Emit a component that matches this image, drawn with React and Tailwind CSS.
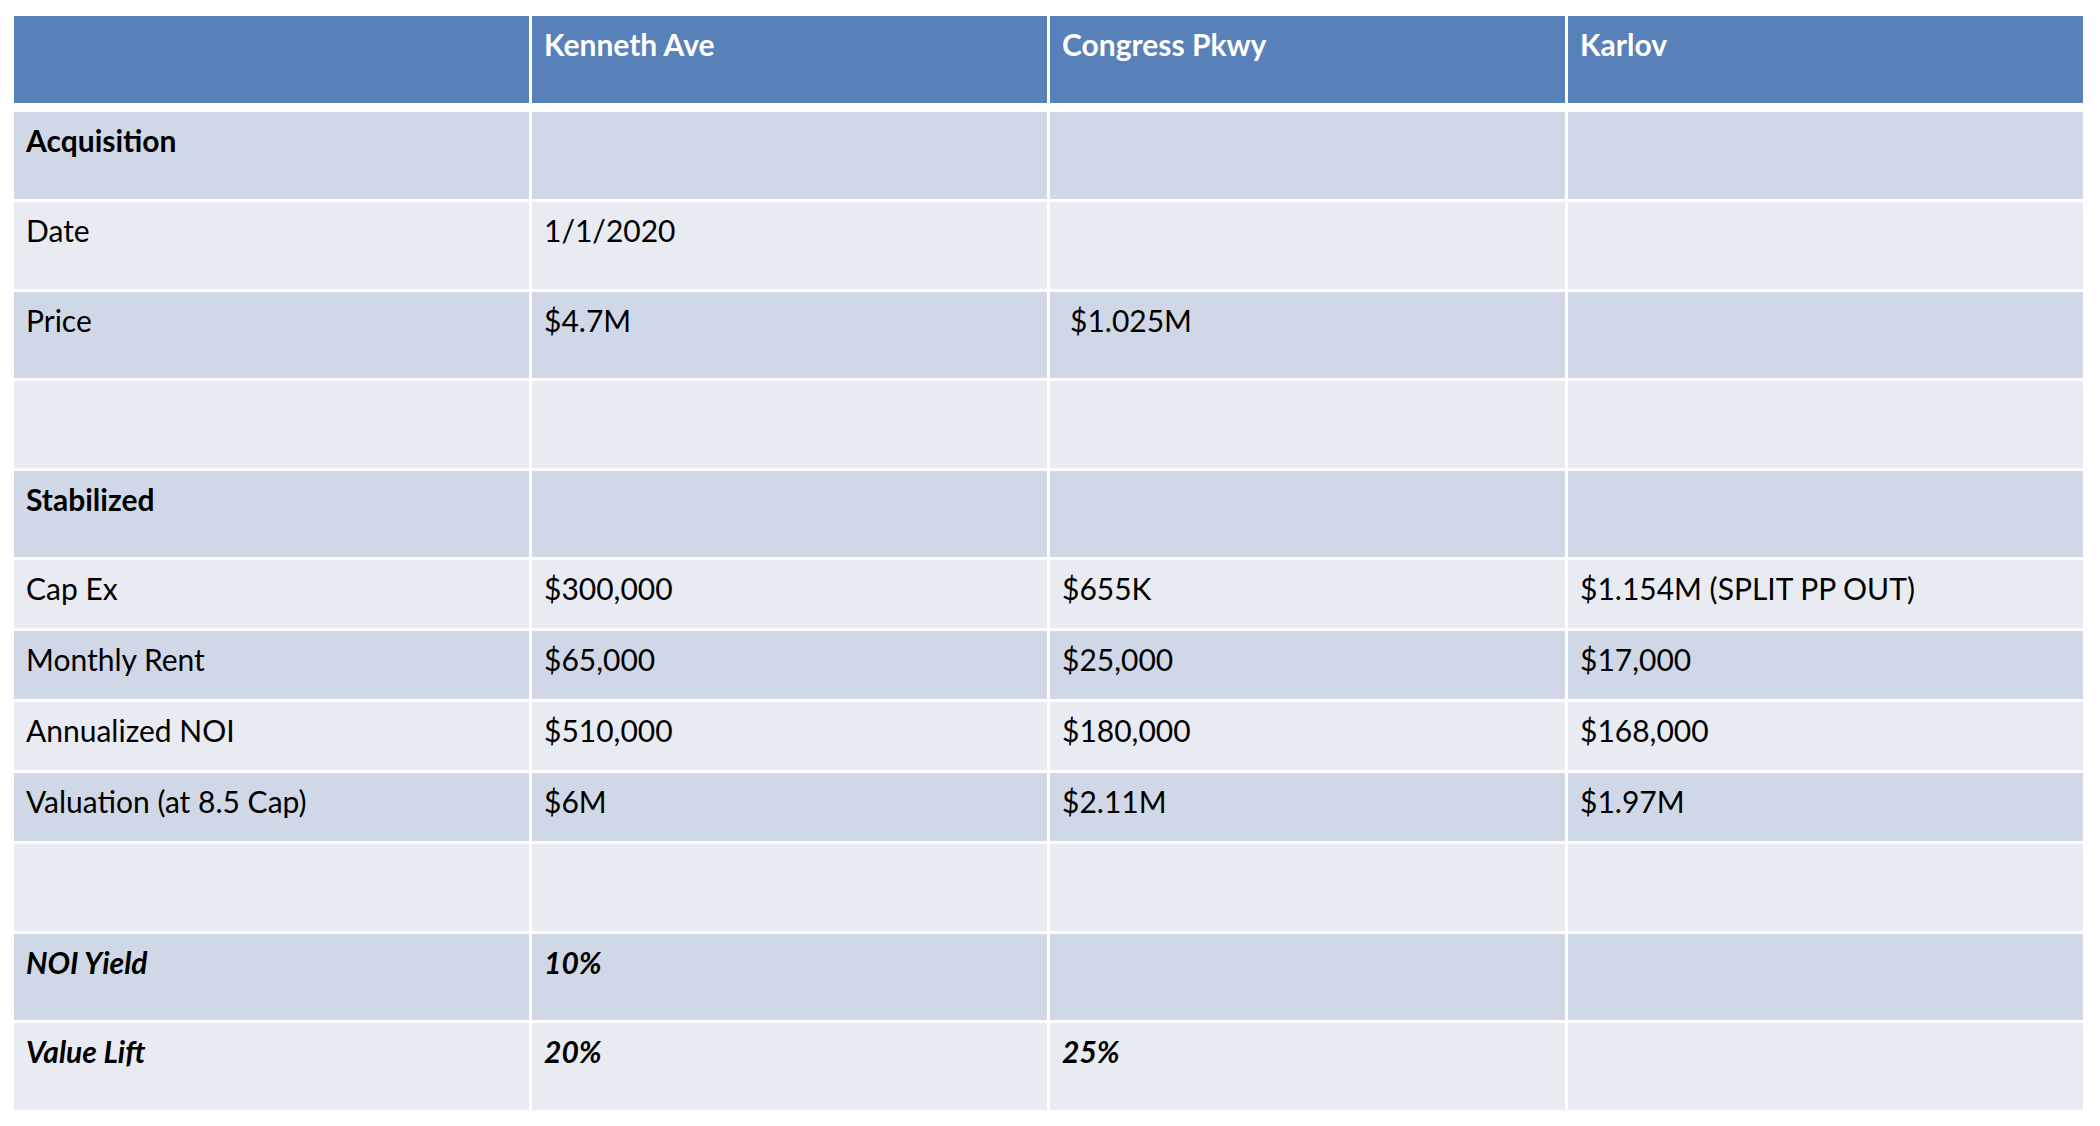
import React from 'react';

const rows = [
  { h: 'h-[87px]', cells: ['Acquisition', '', '', ''], style: 'bold' },
  { h: 'h-[87px]', cells: ['Date', '1/1/2020', '', ''] },
  { h: 'h-[86px]', cells: ['Price', '$4.7M', '$1.025M', ''], indent: 2 },
  { h: 'h-[87px]', cells: ['', '', '', ''] },
  { h: 'h-[86px]', cells: ['Stabilized', '', '', ''], style: 'bold' },
  { h: 'h-[68px]', cells: ['Cap Ex', '$300,000', '$655K', '$1.154M (SPLIT PP OUT)'] },
  { h: 'h-[68px]', cells: ['Monthly Rent', '$65,000', '$25,000', '$17,000'] },
  { h: 'h-[68px]', cells: ['Annualized NOI', '$510,000', '$180,000', '$168,000'] },
  { h: 'h-[68px]', cells: ['Valuation (at 8.5 Cap)', '$6M', '$2.11M', '$1.97M'] },
  { h: 'h-[87px]', cells: ['', '', '', ''] },
  { h: 'h-[86px]', cells: ['NOI Yield', '10%', '', ''], style: 'bolditalic' },
  { h: 'h-[87px]', cells: ['Value Lift', '20%', '25%', ''], style: 'bolditalic' },
];

const headers = ['', 'Kenneth Ave', 'Congress Pkwy', 'Karlov'];

const App = () => {
  return (
    <div className="w-[2100px] h-[1126px] bg-white pt-[16px] pl-[14px]" style={{ fontFamily: 'Lato, "Open Sans", sans-serif' }}>
      <div className="w-[2069px] flex flex-col">
        {/* header */}
        <div className="grid grid-cols-4 gap-x-[3px] h-[87px] mb-[9px]">
          {headers.map((h, i) => (
            <div key={i} className="bg-[#5981b9] px-[12px] pt-[13px] text-white font-bold text-[30px] leading-none">
              {h}
            </div>
          ))}
        </div>

        {rows.map((row, r) => (
          <div key={r} className={`grid grid-cols-4 gap-x-[3px] mb-[3px] ${row.h}`}>
            {row.cells.map((c, i) => {
              let cls = 'font-normal';
              if (row.style === 'bold' && i === 0) cls = 'font-bold';
              if (row.style === 'bolditalic') cls = 'font-bold italic';
              return (
                <div
                  key={i}
                  className={`${r % 2 === 0 ? 'bg-[#d0d7e6]' : 'bg-[#e8ebf2]'} ${i === 2 && row.indent ? 'pl-[20px]' : 'pl-[12px]'} pr-[12px] pt-[13px] text-black text-[30px] leading-none ${cls}`}
                >
                  {c}
                </div>
              );
            })}
          </div>
        ))}
      </div>
    </div>
  );
};

export default App;
